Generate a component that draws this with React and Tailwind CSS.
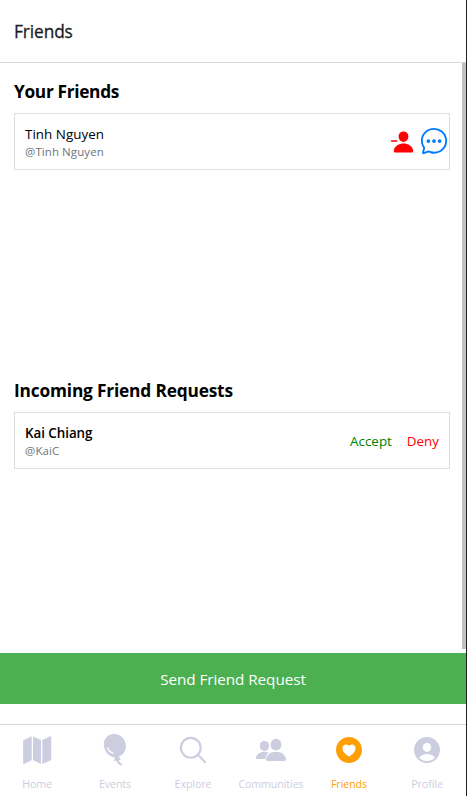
import React from "react";
import {
  IoHeartCircle,
  IoPersonCircle,
  IoPersonRemove,
  IoChatbubbleEllipsesOutline,
} from "react-icons/io5";

function MapIcon() {
  return (
    <svg width="32" height="32" viewBox="0 0 32 32" fill="currentColor">
      <path d="M10.7 2.5V26.2L3.6 29.8Q2.1 30.4 2.1 28.9V7.2Q2.1 6.3 2.9 5.9L9.6 2.7Z" />
      <path d="M12 2.5L20 6V29.9L12 26.1Z" />
      <path d="M21.3 6L28.6 2.4Q30.2 1.8 30.2 3.4V25Q30.2 26 29.4 26.5L21.3 29.9Z" />
    </svg>
  );
}

function BalloonIcon() {
  return (
    <svg width="32" height="32" viewBox="0 0 32 32" fill="none">
      <path fill="currentColor" d="M15.5.1C9.2-.2 4.3 4.7 4.8 11.2c.5 6.4 5.3 11.7 11.2 12.3l-.9 2.4c-.2.7.2 1.1.9 1l1.5-.2c.7 2.2 2.1 3.9 4.5 5l1.3-1.7c-1.9-.8-3-2-3.6-3.7l1.3-.3c.7-.2.8-.7.3-1.2l-1.6-2c4.7-1.7 7.5-6.3 7.1-11.8C26.3 5 21.6.4 15.5.1Z" />
      <path d="M8.8 14.1c.8 2.5 2.5 4.3 5 5.1" stroke="white" strokeWidth="1.4" strokeLinecap="round" />
    </svg>
  );
}

function SearchIcon() {
  return (
    <svg width="32" height="32" viewBox="0 0 32 32" fill="none" stroke="currentColor" strokeWidth="2.1" strokeLinecap="round">
      <circle cx="13.8" cy="13.8" r="9.9" />
      <path d="M21.1 21.1L28.1 28.1" />
    </svg>
  );
}

function PeopleIcon() {
  return (
    <svg width="32" height="32" viewBox="0 0 32 32" fill="currentColor">
      <ellipse cx="9.4" cy="11.9" rx="4.6" ry="5" />
      <ellipse cx="21" cy="10.7" rx="5.5" ry="5.9" />
      <path d="M13.6 18.4C12.4 17.9 11 17.7 9.4 17.7 5.2 17.7 1.9 20.1 1 23.4c-.3 1 .2 1.6 1 1.6h8.1c.4-2.6 1.7-5 3.5-6.6Z" />
      <path d="M21 17.8c-5.4 0-9.2 2.8-10 7-.3 1.4.3 2.2 1.4 2.2h17.2c1.1 0 1.7-.8 1.4-2.2-.8-4.2-4.6-7-10-7Z" />
    </svg>
  );
}

const tabs = [
  { label: "Home", icon: <MapIcon /> },
  { label: "Events", icon: <BalloonIcon /> },
  { label: "Explore", icon: <SearchIcon /> },
  { label: "Communities", icon: <PeopleIcon /> },
  { label: "Friends", icon: <IoHeartCircle size={32} />, active: true },
  { label: "Profile", icon: <IoPersonCircle size={32} /> },
];

function FriendRow({ name, handle, nameClass, children }) {
  return (
    <div className="mr-3 flex h-[57px] items-center justify-between border border-[#dddddd] pl-2.5">
      <div>
        <div className={nameClass}>{name}</div>
        <div className="text-[11.5px] leading-[16px] tracking-[0.08px] text-[#6c757d]">{handle}</div>
      </div>
      {children}
    </div>
  );
}

export default function App() {
  return (
    <div className="flex h-[796px] w-[467px] flex-col overflow-hidden border-r border-[#222222] bg-white font-['Open_Sans',sans-serif] whitespace-nowrap">
      <header className="flex h-[63px] shrink-0 items-center border-b border-[#d8d8d8] pt-0.5 pl-3.5 text-[17.3px] tracking-[-0.1px] text-[#1c1c1e] [-webkit-text-stroke:0.3px_#1c1c1e]">
        Friends
      </header>
      <main className="flex h-[586px] shrink-0 flex-col border-r-4 border-[#c1c1c1] pl-3.5">
        <section className="h-[299px] pt-4">
          <h2 className="mb-[9px] h-[25px] text-[17.3px] leading-[25px] font-bold tracking-[-0.32px] text-black">Your Friends</h2>
          <FriendRow name="Tinh Nguyen" handle="@Tinh Nguyen" nameClass="text-[13.4px] leading-[20px] tracking-[0.03px] text-black">
            <div className="flex items-center gap-[5px] pb-0.5">
              <IoPersonRemove size={24} color="#ff0000" className="mt-0.5" />
              <IoChatbubbleEllipsesOutline size={30} color="#007bff" />
            </div>
          </FriendRow>
        </section>
        <section className="pt-4">
          <h2 className="mb-[9px] h-[25px] text-[17.3px] leading-[25px] font-bold tracking-[-0.17px] text-black">Incoming Friend Requests</h2>
          <FriendRow name="Kai Chiang" handle="@KaiC" nameClass="text-[13.4px] leading-[20px] font-semibold tracking-[-0.05px] text-black">
            <div className="flex gap-[15px] pt-0.5 pr-2.5 text-[13.4px]">
              <button className="text-[#008000]">Accept</button>
              <button className="text-[#ff0000]">Deny</button>
            </div>
          </FriendRow>
        </section>
      </main>
      <button className="mt-1 h-[51px] shrink-0 bg-[#4caf50] pt-0.5 text-[15.3px] tracking-[-0.08px] text-white">Send Friend Request</button>
      <nav className="mt-5 h-[72px] shrink-0 border-t border-[#d8d8d8]">
        <div className="-ml-0.5 flex w-[468px]">
          {tabs.map(({ label, icon, active }) => (
            <div key={label} className={`flex min-w-0 flex-1 flex-col items-center pt-[9px] ${active ? "text-[#ff9f05]" : "text-[#cdcde0]"}`}>
              {icon}
              <span className="mt-2.5 text-[10.6px] leading-[16px] tracking-[-0.05px]">{label}</span>
            </div>
          ))}
        </div>
      </nav>
    </div>
  );
}
